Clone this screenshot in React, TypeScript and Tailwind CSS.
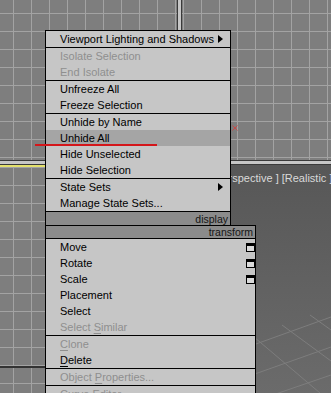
import React from "react";

type Item = {
  label: string;
  dis?: boolean;
  sub?: boolean;
  icon?: boolean;
  hl?: boolean;
  u?: number;
};

const grid =
  "[background-image:linear-gradient(to_right,#a3a3a3_1px,transparent_1px),linear-gradient(to_bottom,#a3a3a3_1px,transparent_1px)] [background-size:18px_18px] bg-[#7e7e7e]";

const displayGroups: Item[][] = [
  [{label: "Viewport Lighting and Shadows", sub: true}],
  [
    {label: "Isolate Selection", dis: true},
    {label: "End Isolate", dis: true},
  ],
  [{label: "Unfreeze All"}, {label: "Freeze Selection"}],
  [
    {label: "Unhide by Name"},
    {label: "Unhide All", hl: true},
    {label: "Hide Unselected"},
    {label: "Hide Selection"},
  ],
  [{label: "State Sets", sub: true}, {label: "Manage State Sets..."}],
];

const transformGroups: Item[][] = [
  [
    {label: "Move", icon: true},
    {label: "Rotate", icon: true},
    {label: "Scale", icon: true},
    {label: "Placement"},
    {label: "Select"},
    {label: "Select Similar", dis: true, u: 7},
  ],
  [
    {label: "Clone", dis: true, u: 0},
    {label: "Delete", u: 0},
  ],
  [{label: "Object Properties...", dis: true, u: 7}],
  [{label: "Curve Editor...", dis: true}],
];

const Label = ({item}: {item: Item}) => {
  if (item.u === undefined) return <>{item.label}</>;
  const i = item.u;
  return (
    <>
      {item.label.slice(0, i)}
      <span className="underline underline-offset-[2px]">{item.label[i]}</span>
      {item.label.slice(i + 1)}
    </>
  );
};

const Row = ({item}: {item: Item}) => (
  <div
    className={`relative h-[16px] leading-[16px] pl-[14px] text-[11px] whitespace-nowrap ${
      item.hl ? "bg-[#a5a5a5]" : ""
    } ${item.dis ? "text-[#8f8f8f]" : "text-black"}`}
  >
    <Label item={item} />
    {item.sub && (
      <span className="absolute right-[7px] top-[4px] w-0 h-0 border-y-[4px] border-y-transparent border-l-[5px] border-l-black" />
    )}
    {item.icon && (
      <span className="absolute right-0 top-[4px] w-[9px] h-[9px] border border-black border-t-[3px] bg-[#dadada]" />
    )}
  </div>
);

const Groups = ({groups, first}: {groups: Item[][]; first: boolean}) => (
  <>
    {groups.map((g, gi) => (
      <div
        key={gi}
        className={gi === 0 && !first ? "" : "border-t border-black"}
      >
        {g.map((item) => (
          <Row key={item.label} item={item} />
        ))}
      </div>
    ))}
  </>
);

export default function App() {
  return (
    <div className="relative w-[331px] h-[393px] overflow-hidden font-['Liberation_Sans',Arial,sans-serif] grid grid-cols-[177px_5px_1fr] grid-rows-[160px_5px_1fr]">
      {/* TOP VIEWPORTS */}
      <div className={`${grid} [background-position:13px_13px]`} />
      <div className="bg-[#c6c6c6] border-x border-[#3a3a3a]" />
      <div className={`${grid} [background-position:1px_13px]`} />
      <div className="col-span-3 bg-[#c6c6c6] border-y border-[#3a3a3a]" />

      {/* BOTTOM VIEWPORTS */}
      <div
        className={`relative ${grid} [background-position:13px_0px] border-t-2 border-[#e4e16c]`}
      >
        <div className="absolute left-0 right-0 top-[199px] h-[2px] bg-[#333333]" />
      </div>
      <div className="bg-[#c6c6c6] border-x border-[#3a3a3a]" />
      <div className="relative bg-[linear-gradient(to_bottom,#575757,#6b6b6b)] pl-[27px] pt-[6px]">
        <svg
          className="absolute inset-0"
          width="149"
          height="228"
          viewBox="0 0 149 228"
        >
          <g stroke="#7d7d7d" strokeWidth="1" fill="none">
            <line x1="60" y1="184" x2="149" y2="152" />
            <line x1="70" y1="210" x2="149" y2="182" />
            <line x1="85" y1="232" x2="149" y2="210" />
            <line x1="100" y1="160" x2="149" y2="196" />
            <line x1="72" y1="172" x2="138" y2="228" />
            <line x1="128" y1="150" x2="149" y2="165" />
          </g>
        </svg>
        <div className="relative text-[11px] leading-[14px] text-[#dadada] whitespace-nowrap">
          [ Perspective ] [Realistic ]
        </div>
      </div>

      {/* QUAD MENU */}
      <div className="absolute left-[45px] top-[30px] flex flex-col items-start">
        <div className="w-[186px] border-x border-t border-black bg-[#c6c6c6]">
          <Groups groups={displayGroups} first={false} />
          <div className="border-t border-black h-[14px] leading-[14px] bg-[#8b8b8b] text-right pr-[2px] text-[10.5px] text-[#151515]">
            display
          </div>
        </div>
        <div className="w-[211px] border border-black bg-[#c6c6c6]">
          <div className="h-[12px] leading-[12px] bg-[#8b8b8b] text-right pr-[2px] text-[10.5px] text-[#151515]">
            transform
          </div>
          <Groups groups={transformGroups} first={true} />
        </div>
      </div>

      {/* ANNOTATION */}
      <div className="absolute left-[35px] top-[144px] w-[122px] h-[2px] bg-[#d4161a]" />
      <svg
        className="absolute left-[232px] top-[125px]"
        width="6"
        height="6"
        viewBox="0 0 6 6"
      >
        <g stroke="#c84848" strokeWidth="1">
          <line x1="0.5" y1="0.5" x2="5.5" y2="5.5" />
          <line x1="5.5" y1="0.5" x2="0.5" y2="5.5" />
        </g>
      </svg>
    </div>
  );
}
